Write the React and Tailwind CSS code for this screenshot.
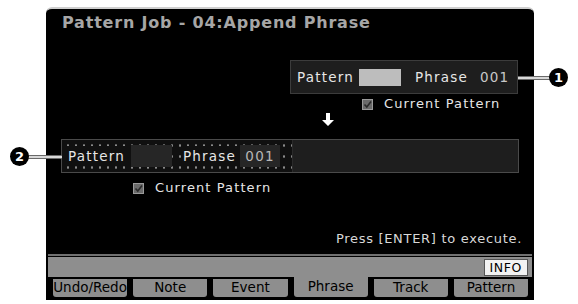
import React from 'react';

const font = { fontFamily: '"DejaVu Sans", "Liberation Sans", sans-serif' };

const tabs = ['Undo/Redo', 'Note', 'Event', 'Phrase', 'Track', 'Pattern'];

const Checkbox = () => (
  <span className="w-[11px] h-[11px] bg-[#6a6a6a] border border-[#9a9a9a] flex items-center justify-center">
    <svg width="9" height="9" viewBox="0 0 9 9">
      <path d="M1.5 4.5 L3.8 7 L8 1.5" stroke="#2a2a2a" strokeWidth="1.6" fill="none" />
    </svg>
  </span>
);

const Callout = ({ n }) => (
  <span className="w-[19px] h-[19px] rounded-full bg-black text-white text-[13px] font-bold flex items-center justify-center leading-none" style={font}>
    {n}
  </span>
);

export default function App() {
  return (
    <div className="relative w-[578px] h-[304px] bg-white overflow-hidden" style={font}>
      {/* LCD screen */}
      <div className="absolute left-[46px] top-[7px] w-[488px] h-[293px] bg-black rounded-tl-[6px] rounded-tr-[6px] border-t-2 border-[#cfcfcf] flex flex-col">
        <div className="pl-[16px] pt-[5px] text-[16px] font-bold tracking-[0.8px] text-[#a6a6a6] leading-[18px]">
          Pattern Job - 04:Append Phrase
        </div>

        {/* source */}
        <div className="flex justify-end pr-[16px] mt-[28px]">
          <div className="w-[228px] h-[34px] bg-[#1e1e1e] border border-[#3c3c3c] flex items-center pl-[6px] text-[13.5px] tracking-[1.2px] text-[#e6e6e6]">
            <span>Pattern</span>
            <span className="ml-[5px] w-[42px] h-[17px] bg-[#bdbdbd]"></span>
            <span className="ml-[14px]">Phrase</span>
            <span className="ml-[12px] text-[#c8c8c8]">001</span>
          </div>
        </div>
        <div className="flex items-center pl-[316px] mt-[2px] gap-[11px] text-[13px] tracking-[1.1px] text-[#e6e6e6] leading-[16px]">
          <Checkbox />
          <span>Current Pattern</span>
        </div>
        <div className="pl-[275px] mt-[1px] h-[14px]">
          <svg width="14" height="14" viewBox="0 0 14 14">
            <path d="M5 0 H9 V7 H13 L7 13 L1 7 H5 Z" fill="#ffffff" />
          </svg>
        </div>

        {/* destination */}
        <div className="ml-[15px] mr-[15px] mt-[12px] h-[34px] border border-[#4a4a4a] flex">
          <div className="w-[230px] bg-[#101010] bg-[radial-gradient(circle,#8a8a8a_0.9px,transparent_1.5px)] bg-[length:8px_11px] bg-[position:2px_0px] flex items-center pl-[5px] text-[13.5px] tracking-[1.2px] text-[#e6e6e6]">
            <span className="bg-[#101010] px-[1px]">Pattern</span>
            <span className="ml-[5px] w-[41px] h-[22px] bg-[#262626]"></span>
            <span className="ml-[10px] bg-[#101010] px-[1px]">Phrase</span>
            <span className="ml-[3px] w-[40px] h-[22px] bg-[#262626] flex items-center justify-center text-[#b8b8b8]">001</span>
          </div>
          <div className="flex-1 bg-[#1e1e1e] border-l border-[#2a2a2a]"></div>
        </div>
        <div className="flex items-center pl-[87px] mt-[7px] gap-[11px] text-[13px] tracking-[1.1px] text-[#e6e6e6] leading-[16px]">
          <Checkbox />
          <span>Current Pattern</span>
        </div>

        <div className="flex-1"></div>
        <div className="text-right pr-[12px] text-[13px] tracking-[0.7px] text-[#d8d8d8] leading-[16px] mb-[7px]">
          Press [ENTER] to execute.
        </div>

        {/* bottom bar */}
        <div className="border-t-2 border-[#707070] mx-[2px]"></div>
        <div className="mx-[2px] mt-[1px] h-[20px] bg-[#8e8e8e] flex justify-end items-center pr-[4px]">
          <span className="h-[17px] px-[5px] bg-[#f2f2f2] border border-[#555] text-[12.5px] text-black leading-[15px] tracking-[0.6px]">INFO</span>
        </div>
        <div className="mx-[2px] h-[20px] flex gap-[6px] pl-[5px] pr-[4px] mb-[3px]">
          {tabs.map((t) => (
            <div
              key={t}
              className={`flex-1 flex items-center justify-center text-[13.5px] text-black rounded-b-[3px] leading-none ${
                t === 'Phrase' ? 'bg-[#8e8e8e]' : 'bg-[#8e8e8e] border-t-2 border-black'
              }`}
            >
              {t}
            </div>
          ))}
        </div>
      </div>

      {/* callout 1 */}
      <div className="absolute left-[518px] top-[76px] w-[34px] h-[4px] bg-[#d8d8d8] border-y border-[#6a6a6a]"></div>
      <div className="absolute left-[549px] top-[68px]">
        <Callout n="1" />
      </div>

      {/* callout 2 */}
      <div className="absolute left-[26px] top-[155px] w-[36px] h-[4px] bg-[#d8d8d8] border-y border-[#6a6a6a]"></div>
      <div className="absolute left-[10px] top-[147px]">
        <Callout n="2" />
      </div>
    </div>
  );
}
